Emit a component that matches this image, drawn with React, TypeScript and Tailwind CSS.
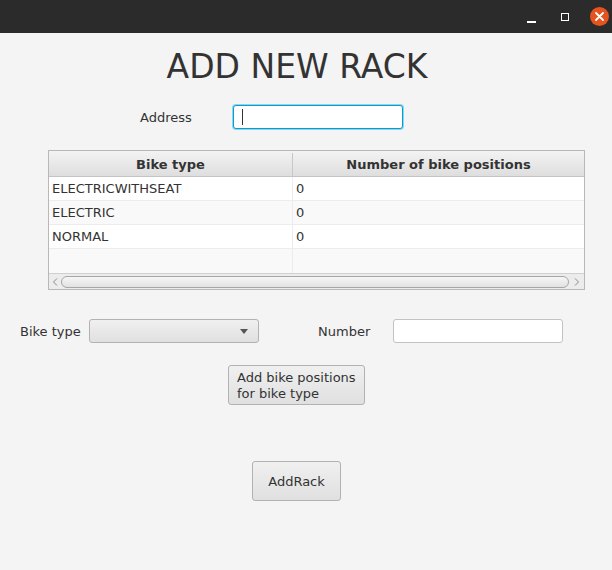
const font = { fontFamily: '"DejaVu Sans", Verdana, sans-serif' };

const rows = [
  { type: 'ELECTRICWITHSEAT', count: '0' },
  { type: 'ELECTRIC', count: '0' },
  { type: 'NORMAL', count: '0' },
];

function TitleBar() {
  return (
    <div className="flex h-[33px] items-center justify-end bg-[#2b2b2b] pr-[3px]">
      {/* minimise */}
      <span className="mt-[10px] h-[2px] w-[9px] bg-white" />
      {/* maximise */}
      <span className="ml-[25px] h-[8px] w-[8px] border-[1.5px] border-white" />
      {/* close */}
      <span className="ml-[21px] flex h-[19px] w-[19px] items-center justify-center rounded-full bg-[#e5531f]">
        <svg width="9" height="9" viewBox="0 0 9 9">
          <path d="M1 1 L8 8 M8 1 L1 8" stroke="white" strokeWidth="1.8" strokeLinecap="round" />
        </svg>
      </span>
    </div>
  );
}

function RackTable() {
  return (
    <div className="ml-[48px] mt-[21px] flex h-[140px] w-[537px] flex-col border border-[#b8b8b8] bg-[#f9f9f9]">
      {/* header */}
      <div className="flex h-[26px] border-b border-[#c4c4c4] bg-gradient-to-b from-[#f3f3f3] to-[#dedede] pt-[2px] text-[13px] font-bold text-[#333]">
        <div className="flex w-[244px] items-center justify-center border-r border-[#c8c8c8]">Bike type</div>
        <div className="flex flex-1 items-center justify-center">Number of bike positions</div>
      </div>
      {rows.map((r, i) => (
        <div
          key={r.type}
          className={`flex h-[24px] border-b border-[#ececec] text-[13px] text-[#333] ${i % 2 === 0 ? 'bg-white' : 'bg-[#f9f9f9]'}`}
        >
          <div className="flex w-[244px] items-center border-r border-[#ececec] pl-[3px]">{r.type}</div>
          <div className="flex flex-1 items-center pl-[3px]">{r.count}</div>
        </div>
      ))}
      <div className="flex flex-1">
        <div className="w-[244px] border-r border-[#ececec]" />
        <div className="flex-1" />
      </div>
      {/* horizontal scrollbar */}
      <div className="flex h-[16px] items-center border-t border-[#d0d0d0] bg-[#ececec]">
        <svg width="12" height="10" viewBox="0 0 12 10" className="ml-[1px]">
          <path d="M7 1.5 L3.5 5 L7 8.5" stroke="#8a8a8a" strokeWidth="1" fill="none" />
        </svg>
        <div className="mx-[-1px] h-[12px] flex-1 rounded-[6px] border border-[#a6a6a6] bg-gradient-to-b from-[#f6f6f6] to-[#e2e2e2]" />
        <svg width="16" height="10" viewBox="0 0 16 10">
          <path d="M7 1.5 L10.5 5 L7 8.5" stroke="#8a8a8a" strokeWidth="1" fill="none" />
        </svg>
      </div>
    </div>
  );
}

export default function App() {
  return (
    <div className="w-[612px] h-[570px] overflow-hidden bg-[#f4f4f4] text-[#333]" style={font}>
      <TitleBar />

      <h1 className="mt-[17px] h-[33px] pr-[18px] text-center text-[33px] leading-[33px] text-[#333]">ADD NEW RACK</h1>

      {/* address */}
      <div className="mt-[22px] flex h-[24px] items-center pl-[140px]">
        <span className="w-[93px] pt-[2px] text-[13px]">Address</span>
        <div className="flex h-[24px] w-[170px] items-center rounded-[3px] border border-[#039ed3] bg-white pl-[8px] shadow-[0_0_0_1px_#8fd4ec]">
          <span className="h-[16px] w-[1px] bg-[#333]" />
        </div>
      </div>

      <RackTable />

      {/* bike type + number */}
      <div className="mt-[29px] flex h-[24px] items-center pl-[20px]">
        <span className="w-[69px] pt-[2px] text-[13px]">Bike type</span>
        <div className="flex h-[24px] w-[170px] items-center justify-end rounded-[3px] border border-[#b2b2b2] bg-gradient-to-b from-[#f0f0f0] to-[#e0e0e0] pr-[10px]">
          <svg width="8" height="5" viewBox="0 0 8 5">
            <path d="M0 0 L8 0 L4 5 Z" fill="#555" />
          </svg>
        </div>
        <span className="ml-[59px] w-[75px] pt-[2px] text-[13px]">Number</span>
        <div className="h-[24px] w-[170px] rounded-[3px] border border-[#c2c2c2] bg-white" />
      </div>

      <div className="ml-[228px] mt-[22px]">
        <button className="flex h-[40px] w-[137px] flex-col items-start justify-center rounded-[3px] border border-[#b2b2b2] bg-gradient-to-b from-[#f0f0f0] to-[#e0e0e0] pl-[8px] pt-[2px] text-left text-[13px] leading-[16px] text-[#333]">
          <span>Add bike positions</span>
          <span>for bike type</span>
        </button>
      </div>

      <div className="ml-[252px] mt-[56px]">
        <button className="flex h-[40px] w-[89px] items-center justify-center rounded-[3px] border border-[#b2b2b2] bg-gradient-to-b from-[#f0f0f0] to-[#e0e0e0] pt-[2px] text-[13px] text-[#333]">
          AddRack
        </button>
      </div>
    </div>
  );
}
